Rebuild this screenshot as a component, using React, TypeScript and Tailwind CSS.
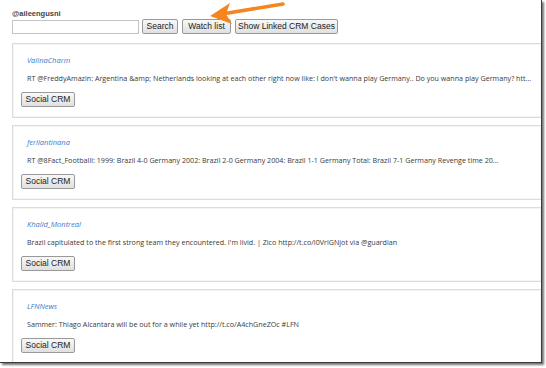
import React from "react";

const tweets = [
  {
    user: "ValinaCharm",
    text: "RT @FreddyAmazin: Argentina &amp; Netherlands looking at each other right now like: I don't wanna play Germany.. Do you wanna play Germany? htt...",
  },
  {
    user: "ferliantinana",
    text: "RT @8Fact_Footballl: 1999: Brazil 4-0 Germany 2002: Brazil 2-0 Germany 2004: Brazil 1-1 Germany Total: Brazil 7-1 Germany Revenge time 20...",
  },
  {
    user: "Khalid_Montreal",
    text: "Brazil capitulated to the first strong team they encountered. I'm livid. | Zico http://t.co/l0VrlGNjot via @guardian",
  },
  {
    user: "LFNNews",
    text: "Sammer: Thiago Alcantara will be out for a while yet http://t.co/A4chGneZOc #LFN",
  },
];

function Btn({ children, w }: { children: React.ReactNode; w: string }) {
  return (
    <button
      className={`${w} h-[15px] flex items-center justify-center border border-[#999] rounded-[2px] bg-gradient-to-b from-[#f8f8f8] to-[#e0e0e0] text-[8.5px] leading-none text-[#222] [font-family:'Liberation_Sans',Arial,sans-serif]`}
    >
      {children}
    </button>
  );
}

export default function App() {
  return (
    <div className="w-[546px] h-[368px] bg-white overflow-hidden">
      <div className="relative w-[542px] h-[363px] bg-white border-r border-b border-[#3c3c3c] shadow-[2px_2px_2px_rgba(0,0,0,0.55)] overflow-hidden">
        <div className="pl-[12px] pt-[9px]">
          <div className="text-[7.5px] leading-[9px] font-bold text-[#444] [font-family:'Liberation_Sans',Arial,sans-serif]">
            @aileengusni
          </div>
          <div className="flex items-center mt-[1px] h-[15px]">
            <input className="w-[127px] h-[14px] border border-[#c4c4c4] bg-white outline-none" />
            <div className="ml-[3px]">
              <Btn w="w-[36px]">Search</Btn>
            </div>
            <div className="ml-[4px]">
              <Btn w="w-[49px]">Watch list</Btn>
            </div>
            <div className="ml-[4px]">
              <Btn w="w-[103px]">Show Linked CRM Cases</Btn>
            </div>
          </div>
        </div>
        <div className="flex flex-col gap-[7px] pl-[12px] mt-[9px]">
          {tweets.map((t) => (
            <div
              key={t.user}
              className="h-[75px] border border-r-0 border-[#dcdcdc] shadow-[inset_0_0_0_1px_#f4f4f4] flex flex-col"
            >
              <div className="pl-[14px] pt-[11px] h-[11px] box-content text-[7.5px] leading-[11px] italic text-[#3d7cc9] [font-family:'Open_Sans',sans-serif] whitespace-nowrap">
                {t.user}
              </div>
              <div className="pl-[14px] mt-[7px] h-[11px] text-[7.15px] leading-[11px] text-[#3a3a3a] [font-family:'Open_Sans',sans-serif] whitespace-nowrap">
                {t.text}
              </div>
              <div className="pl-[8px] mt-[8px]">
                <Btn w="w-[54px]">Social CRM</Btn>
              </div>
            </div>
          ))}
        </div>
        <svg
          className="absolute left-0 top-0"
          width="300"
          height="30"
          viewBox="0 0 300 30"
        >
          <line x1="283" y1="4" x2="222" y2="14" stroke="#f7851f" strokeWidth="3.6" strokeLinecap="round" />
          <polygon points="210,16 230,3 226,14 232,24" fill="#f7851f" />
        </svg>
      </div>
    </div>
  );
}
